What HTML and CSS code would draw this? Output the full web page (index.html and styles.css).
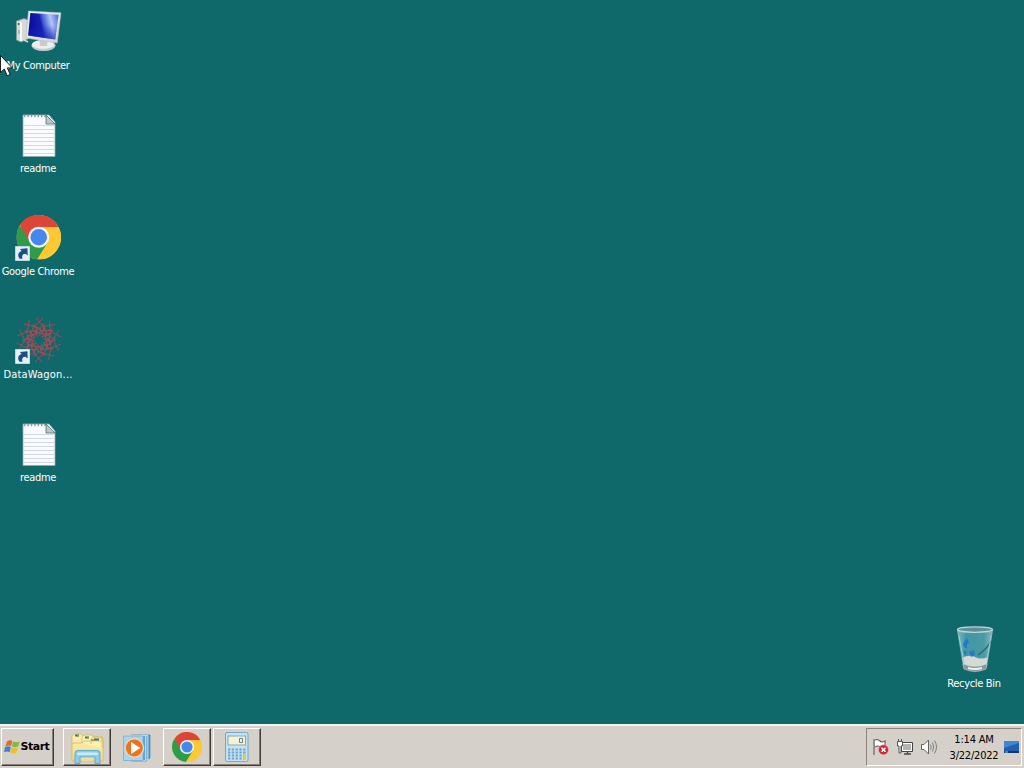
FILE: index.html
```html
<!DOCTYPE html>
<html lang="en">
<head>
<meta charset="utf-8">
<title>Desktop</title>
<link rel="stylesheet" href="styles.css">
</head>
<body>
<svg class="defs" width="0" height="0">
  <defs>
    <linearGradient id="screen" x1="0" y1=".3" x2="1" y2="0.1"><stop offset="0" stop-color="#0a0c98"/><stop offset=".38" stop-color="#1420b4"/><stop offset=".46" stop-color="#3c58d4"/><stop offset=".72" stop-color="#b0c6f4"/><stop offset="1" stop-color="#4c6ae0"/></linearGradient>
    <linearGradient id="shade" x1="0" y1="0" x2="0" y2="1"><stop offset=".45" stop-color="#1828c0" stop-opacity="0"/><stop offset="1" stop-color="#1828c0" stop-opacity=".75"/></linearGradient>
    <linearGradient id="metal" x1="0" y1="0" x2="1" y2="1"><stop offset="0" stop-color="#f4f4f2"/><stop offset="1" stop-color="#d0d2d2"/></linearGradient>
    <linearGradient id="folder" x1="0" y1="0" x2="0" y2="1"><stop offset="0" stop-color="#fbf0b4"/><stop offset="1" stop-color="#f0dc88"/></linearGradient>
    <linearGradient id="glass" x1="0" y1="0" x2="1" y2="0"><stop offset="0" stop-color="#84bcc4"/><stop offset=".25" stop-color="#3f98a4"/><stop offset=".75" stop-color="#4a9aa4"/><stop offset="1" stop-color="#86bcc0"/></linearGradient>
    <symbol id="chrome" viewBox="0 0 44 44">
      <circle cx="22" cy="22" r="22" fill="#fbc934"/>
      <path d="M22 22 L2.9 11 A22 22 0 0 0 20.5 43.9 L31.5 27.5Z" fill="#2f9c4c"/>
      <path d="M22 12 H41.6 A22 22 0 0 0 3.4 10.2 L12.8 26Z" fill="#dc4537"/>
      <path d="M22 12H41.6A22 22 0 0 1 20.5 44L31 27Z" fill="#fbc934"/>
      <circle cx="22" cy="22" r="10.4" fill="#f5f6f3"/>
      <circle cx="22" cy="22" r="8.2" fill="#4587ee"/>
    </symbol>
    <symbol id="shortcut" viewBox="0 0 15 15">
      <path d="M.5 .5h14v14H.5z" fill="#e6eff4" stroke="#c3d4da"/>
      <path d="M4.5 12.7C2 9 3.4 6 6.6 5L5 3 12.4 2.3 12.7 9.6 10.4 7.8C7.8 7.8 6.6 9.6 7.4 12.7Z" fill="#174f86"/>
    </symbol>
    <symbol id="note" viewBox="0 0 48 48">
      <path d="M9 4H35L41 11V45.5H9Z" fill="#fafbfc" stroke="#8da9ae" stroke-width=".8"/>
      <path d="M10 14.5H40M10 18.5H40M10 22.5H40M10 26.5H40M10 30.5H40M10 34.5H40M10 38.5H40M10 42.5H40" stroke="#d2d9e4"/>
      <path d="M10 5H32" stroke="#8a9ba1" stroke-width="2.4" stroke-dasharray="1.4 2"/>
      <path d="M32 4L41 13H32Z" fill="#bac8c9" stroke="#526f74" stroke-width=".8"/>
    </symbol>
  </defs>
</svg>
<main class="desktop">
  <div class="icons">
    <div class="item">
      <svg class="pic" viewBox="0 0 48 48">
        <path d="M2.5 13L10 10.5 14 12V31L7 34 2.5 32Z" fill="#d5d9d7" stroke="#829da0" stroke-width=".7"/>
        <path d="M7 14V33" stroke="#f8f8f6" stroke-width="2"/><circle cx="4.7" cy="16" r="1" fill="#305b61"/>
        <path d="M4 23h2M4 25h2" stroke="#8b9999"/>
        <path d="M10 32L14 34" stroke="#d5d9d7" stroke-width="1.5"/>
        <ellipse cx="29.5" cy="37.6" rx="12" ry="5.4" fill="#c4cccc"/><ellipse cx="29" cy="36.4" rx="11" ry="4.4" fill="#eeefed"/>
        <path d="M25 28h9l-1 10h-7z" fill="#c7cccc"/>
        <path d="M14.5 3L47 4.8 43.2 35 12 30Z" fill="url(#metal)" stroke="#b5bfc1" stroke-width=".6"/>
        <path d="M16.3 5L44.6 6.8 41.3 31.5 14.2 27.5Z" fill="url(#screen)"/>
        <path d="M16.3 5L44.6 6.8 41.3 31.5 14.2 27.5Z" fill="url(#shade)"/>
      </svg>
      <span class="label mycomputer">My Computer</span>
    </div>
    <div class="item"><svg class="pic"><use href="#note"/></svg><span class="label">readme</span></div>
    <div class="item">
      <svg class="pic" viewBox="0 0 48 48"><use href="#chrome" x="2.5" y="1" width="44.5" height="44.5"/><use href="#shortcut" x="1" y="32" width="15" height="15"/></svg>
      <span class="label">Google Chrome</span>
    </div>
    <div class="item">
      <svg class="pic" viewBox="0 0 48 48">
        <g class="mesh">
          <g id="knot"><path d="M22 1L28 8M29 1L21 9M18 8L29 14L25 19M31 7L20 15L27 17M28 8L33 15M21 9L24 16L31 12"/></g>
          <use href="#knot" transform="rotate(36 25 23)"/><use href="#knot" transform="rotate(72 25 23)"/>
          <use href="#knot" transform="rotate(108 25 23)"/><use href="#knot" transform="rotate(144 25 23)"/>
          <use href="#knot" transform="rotate(180 25 23)"/><use href="#knot" transform="rotate(216 25 23)"/>
          <use href="#knot" transform="rotate(252 25 23)"/><use href="#knot" transform="rotate(288 25 23)"/>
          <use href="#knot" transform="rotate(324 25 23)"/>
        </g>
        <use href="#shortcut" x="1" y="32" width="15" height="15"/>
      </svg>
      <span class="label datawagon">DataWagon...</span>
    </div>
    <div class="item"><svg class="pic"><use href="#note"/></svg><span class="label">readme</span></div>
  </div>
  <div class="item bin">
    <svg class="pic" viewBox="0 0 48 48">
      <path d="M6 5L12 42Q24 49 36 42L42 5Z" fill="url(#glass)"/>
      <path d="M11 33Q18 29 24 32T37 32L35.8 39Q24 45 12.3 39Z" fill="#d5dad7"/>
      <path d="M12 39Q24 44 36 39L35 44Q24 49 13 44Z" fill="#899596" stroke="#c7d0cf" stroke-width=".6"/>
      <path d="M17 43Q24 45 31 43" stroke="#eef0ee" stroke-width="2" fill="none"/>
      <path d="M13 17l3-4 2 5-2 1v4h-2l-2-3zM18 27l5-2 1 5-4 2zM12 25l4 2-2 4z" fill="#2878c4"/>
      <path d="M40 16Q36 24 27 30" fill="none" stroke="#1f6670" stroke-width="1.3"/>
      <path d="M8 11L13 38M40 11L36 35" stroke="#a1c9cc" stroke-width="1"/>
      <ellipse cx="24" cy="4.6" rx="17.5" ry="2.7" fill="#5c8f96" stroke="#c4d4d4" stroke-width="1.3"/>
    </svg>
    <span class="label">Recycle Bin</span>
  </div>
</main>
<footer class="taskbar">
  <button class="task start">
    <svg class="flag" viewBox="0 0 16 16"><path d="M3 2.5Q6 .5 8.3 2L7.2 7Q4.5 5.8 1.4 7.3Z" fill="#e8682c"/><path d="M9 2.5Q12 4 15.6 2.5L14.2 7.6Q11 9 8 7.4Z" fill="#7fbb42"/><path d="M1 8Q4 6.7 6.9 8L5.7 13Q3 11.8 0 13.2Z" fill="#3c83d2"/><path d="M7.6 8.4Q10.4 10 13.9 8.6L12.5 13.8Q9.5 15.4 6.3 13.6Z" fill="#f2bd31"/></svg>
    <span>Start</span>
  </button>
  <button class="task raised explorer" aria-label="Windows Explorer">
    <svg width="34" height="32" viewBox="0 0 34 32">
      <path d="M2 28V3L4 1h7l2 3h20v24z" fill="url(#folder)" stroke="#d4ba68" stroke-width=".8"/>
      <path d="M12 10V4l2-2h8l2 3h8v10M21 11V6l2-2h8l2 3v9M2 10h10l2-2h19" fill="#fbefb1" stroke="#d4ba68" stroke-width=".8"/>
      <path d="M5 2.5h4M15 4.5h4M24 6.5h5" stroke="#3d7867" stroke-width="1.8"/><path d="M7 2.5h2M17 4.5h2M21 7h3" stroke="#b8802f" stroke-width="1.4"/>
      <path d="M5 30.5V20Q5 17.5 8 17.5H27Q30 17.5 30 20V30.5H25V24H10V30.5Z" fill="#8dcced" stroke="#5fabd2"/>
      <path d="M7 22V20.5Q7 19.5 9 19.5H26Q28 19.5 28 21.5V22" fill="#c9ecf8"/>
      <path d="M12 24.5H23V28H12Z" fill="#eedc94"/>
    </svg>
  </button>
  <button class="task media" aria-label="Media Player">
    <svg width="30" height="28" viewBox="0 0 30 28"><path d="M9 1H28V24L24 27H9Z" fill="#4c96c8" stroke="#3f85b3" stroke-width=".7"/><path d="M6 1.5H26V26H6Z" fill="#7db8dc" stroke="#d4eaf4" stroke-width=".7"/><path d="M4 1.5H23.5V26.5H4Z" fill="#5fa4d0" stroke="#d4eaf4" stroke-width=".7"/><path d="M1.5 2H21V26.5H1.5Z" fill="#a9d4ea" stroke="#78abc6" stroke-width=".8"/><circle cx="12.3" cy="14" r="9.2" fill="#ec7420" stroke="#e2d5c8" stroke-width="1.5"/><path d="M9 8L18.3 14 9 20Z" fill="#fff"/></svg>
  </button>
  <button class="task raised chrome-task" aria-label="Chrome"><svg width="30" height="30"><use href="#chrome"/></svg></button>
  <button class="task raised calc" aria-label="Calculator">
    <svg width="24" height="30" viewBox="0 0 24 30"><rect x=".5" y=".5" width="22.5" height="29" rx="1.5" fill="#c4e2f2" stroke="#74a8cc"/><rect x="3" y="4" width="17.5" height="9" fill="#f5f1d5" stroke="#8fa8ae"/><path d="M14.5 6.5h3v4h-3z" fill="none" stroke="#507888" stroke-width=".9"/><path d="M3 17.5H21M3 20.5H21M3 23.5H21M3 26.5H21" stroke="#6ea2cc" stroke-width="2" stroke-dasharray="2.3 1.5"/><path d="M18.2 22.5h2.5v5h-2.5z" fill="#ecc64f"/></svg>
  </button>
  <section class="tray">
    <svg width="18" height="18" viewBox="0 0 18 18"><path d="M2 1V17M3 2Q6 1 8 3T13 3V10Q10 11 8 9T3 9" fill="#fff" stroke="#606060" stroke-width="1.1"/><circle cx="11.5" cy="11.8" r="5" fill="#cf2633" stroke="#eab9b9" stroke-width=".6"/><path d="M9.5 9.8l4 4M13.5 9.8l-4 4" stroke="#fff" stroke-width="1.6"/></svg>
    <svg width="18" height="18" viewBox="0 0 18 18"><path d="M5.5 4.5H16.5V13.5H5.5Z" fill="#b4b4b0" stroke="#454545"/><path d="M6.5 5.5H15.5V12.5H6.5Z" fill="none" stroke="#fff"/><path d="M8 16H15M11.5 13V16" stroke="#484848" stroke-width="1.4"/><path d="M1.5 3.5H6.5V8H5V15H3V8H1.5ZM2.5 1V4M5.5 1V4" fill="#fff" stroke="#555"/></svg>
    <svg width="18" height="18" viewBox="0 0 18 18"><path d="M1.5 6.5H4L8.5 2V16L4 11.5H1.5Z" fill="#fafafa" stroke="#626262"/><path d="M10.5 6.5Q12 9 10.5 11.5M12.5 4.5Q15 9 12.5 13.5M14.5 2.5Q18.5 9 14.5 15.5" fill="none" stroke="#818181"/></svg>
    <div class="clock"><span>1:14 AM</span><span class="date">3/22/2022</span></div>
    <svg class="show" width="15" height="14" viewBox="0 0 15 14"><path d="M0 1H15V12H0Z" fill="#225eb2"/><path d="M0 8L15 3V1H0Z" fill="#3c86d5"/><path d="M0 11H15V13H0Z" fill="#1a3562"/><path d="M1 12H4" stroke="#afd0bc"/></svg>
  </section>
</footer>
<svg class="cursor" width="13" height="22" viewBox="0 0 13 22"><path d="M.5 .5V17.5L4.3 14 7.2 20.8 10.2 19.4 7.3 12.9H12.3Z" fill="#fff" stroke="#111" stroke-width=".9"/></svg>
</body>
</html>
```

FILE: styles.css
```css
* { box-sizing: border-box; }
body {
  margin: 0;
  width: 1024px;
  height: 768px;
  overflow: hidden;
  display: flex;
  flex-direction: column;
  background: #0f686a;
  font-family: "DejaVu Sans Condensed", "DejaVu Sans", sans-serif;
  font-stretch: condensed;
  font-size: 11px;
}
svg { display: block; flex: none; }
.defs { position: absolute; }
.desktop {
  flex: 1;
  display: flex;
  justify-content: space-between;
  align-items: flex-end;
}
.icons { align-self: flex-start; display: flex; flex-direction: column; }
.item {
  width: 76px;
  height: 103px;
  padding-top: 8px;
  display: flex;
  flex-direction: column;
  align-items: center;
}
.pic { width: 48px; height: 48px; }
.label {
  margin-top: 3px;
  line-height: 14px;
  color: #fff;
  white-space: nowrap;
  letter-spacing: -0.33px;
}
.datawagon { letter-spacing: 0.2px; }
.bin { margin: 0 12px 1px 0; height: 106px; }
.bin .label { margin-top: 4px; }
.bin .pic { margin-left: 2px; }
.mesh { fill: none; stroke: #a84a56; stroke-width: .85; }
.taskbar {
  height: 44px;
  background: #d5d0c9;
  border-top: 2px solid #f3f2ee;
  padding: 2px 2px 2px 1px;
  display: flex;
}
.task {
  height: 38px;
  margin: 0;
  padding: 0;
  border: 0;
  background: none;
  display: flex;
  align-items: center;
  justify-content: center;
  font: inherit;
  color: #000;
}
.start, .raised {
  border: 1px solid;
  border-color: #fff #3e3d3b #3e3d3b #fff;
  box-shadow: inset -1px -1px #858079;
}
.start {
  width: 53px;
  gap: 1px;
  padding: 0 2px 1px 0;
  font-family: "DejaVu Sans", sans-serif;
  font-stretch: normal;
  font-weight: bold;
  letter-spacing: -0.5px;
}
.flag { width: 16px; height: 16px; }
.raised { width: 48px; }
.explorer { margin-left: 9px; padding-top: 4px; }
.media { width: 52px; padding-top: 2px; }
.calc { margin-left: 2px; }
.chrome-task, .calc { padding-bottom: 1px; }
.tray {
  margin-left: auto;
  width: 156px;
  height: 38px;
  padding-left: 5px;
  border: 1px solid;
  border-color: #8b867f #fff #fff #8b867f;
  display: flex;
  align-items: center;
  gap: 6px;
}
.clock {
  width: 54px;
  margin: 2px 0 0 3px;
  display: flex;
  flex-direction: column;
  align-items: center;
  line-height: 16px;
  letter-spacing: -0.2px;
  white-space: nowrap;
}
.show { margin-left: -3px; }
.cursor { position: absolute; left: 0; top: 55px; }
```
